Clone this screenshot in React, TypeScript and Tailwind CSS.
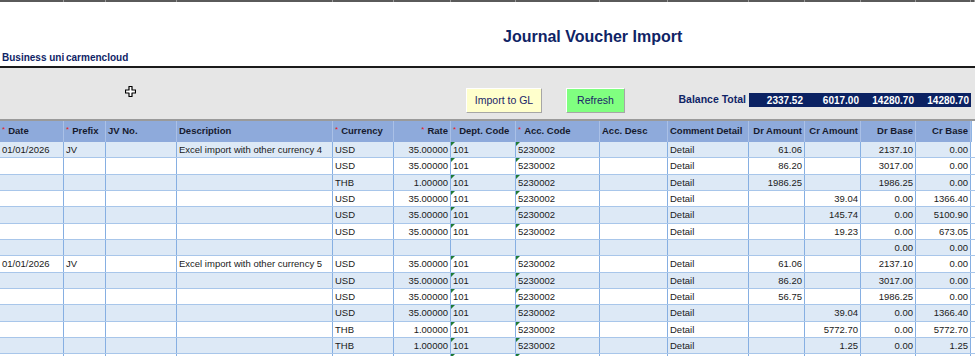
import React from "react";

const COLS =
  "grid grid-cols-[64px_42px_71px_156px_61px_57px_65px_84px_68px_81px_56px_56px_55px_55px_4px]";

type H = { t: string; req?: boolean; right?: boolean };
const headers: H[] = [
  { t: "Date", req: true },
  { t: "Prefix", req: true },
  { t: "JV No." },
  { t: "Description" },
  { t: "Currency", req: true },
  { t: "Rate", req: true, right: true },
  { t: "Dept. Code", req: true },
  { t: "Acc. Code", req: true },
  { t: "Acc. Desc" },
  { t: "Comment Detail" },
  { t: "Dr Amount", right: true },
  { t: "Cr Amount", right: true },
  { t: "Dr Base", right: true },
  { t: "Cr Base", right: true },
];

const RIGHT = new Set([5, 10, 11, 12, 13]);

const line = (
  cur: string,
  rate: string,
  dr: string,
  cr: string,
  drb: string,
  crb: string
) => ["", "", "", "", cur, rate, "101", "5230002", "", "Detail", dr, cr, drb, crb];

const rows: { v: string[]; mark: boolean }[] = [
  {
    v: [
      "01/01/2026",
      "JV",
      "",
      "Excel import with other currency 4",
      "USD",
      "35.00000",
      "101",
      "5230002",
      "",
      "Detail",
      "61.06",
      "",
      "2137.10",
      "0.00",
    ],
    mark: true,
  },
  { v: line("USD", "35.00000", "86.20", "", "3017.00", "0.00"), mark: true },
  { v: line("THB", "1.00000", "1986.25", "", "1986.25", "0.00"), mark: true },
  { v: line("USD", "35.00000", "", "39.04", "0.00", "1366.40"), mark: true },
  { v: line("USD", "35.00000", "", "145.74", "0.00", "5100.90"), mark: true },
  { v: line("USD", "35.00000", "", "19.23", "0.00", "673.05"), mark: true },
  { v: ["", "", "", "", "", "", "", "", "", "", "", "", "0.00", "0.00"], mark: false },
  {
    v: [
      "01/01/2026",
      "JV",
      "",
      "Excel import with other currency 5",
      "USD",
      "35.00000",
      "101",
      "5230002",
      "",
      "Detail",
      "61.06",
      "",
      "2137.10",
      "0.00",
    ],
    mark: true,
  },
  { v: line("USD", "35.00000", "86.20", "", "3017.00", "0.00"), mark: true },
  { v: line("USD", "35.00000", "56.75", "", "1986.25", "0.00"), mark: true },
  { v: line("USD", "35.00000", "", "39.04", "0.00", "1366.40"), mark: true },
  { v: line("THB", "1.00000", "", "5772.70", "0.00", "5772.70"), mark: true },
  { v: line("THB", "1.00000", "", "1.25", "0.00", "1.25"), mark: true },
  { v: ["", "", "", "", "", "", "", "", "", "", "", "", "", ""], mark: true },
];

function Marker() {
  return (
    <span className="absolute left-0 top-0 w-0 h-0 border-t-[4px] border-r-[4px] border-t-[#1e7a34] border-r-transparent" />
  );
}

export default function App() {
  return (
    <div className="w-[975px] h-[356px] overflow-hidden bg-white font-['Liberation_Sans',Arial,sans-serif] text-[#1a1a1a]">
      {/* top strip */}
      <div className={`${COLS} h-[2px]`}>
        {Array.from({ length: 15 }).map((_, i) => (
          <div key={i} className="bg-[#5a5a5a] border-r border-r-[#9a9a9a]" />
        ))}
      </div>

      {/* title area */}
      <div className="h-[64px] flex flex-col">
        <div className="pt-[27px] pl-[503px] text-[16px] leading-[16px] font-bold text-[#0f2466] whitespace-nowrap">
          Journal Voucher Import
        </div>
        <div className={`${COLS} mt-[7.5px] text-[10px] leading-[10px] font-bold text-[#0f2466]`}>
          <div className="pl-[2px] overflow-hidden whitespace-nowrap">Business unit</div>
          <div className="col-span-4 pl-[2px] whitespace-nowrap">carmencloud</div>
        </div>
      </div>

      {/* black line */}
      <div className="h-[2px] bg-[#1a1a1a]" />

      {/* toolbar */}
      <div className="relative h-[51px] bg-[#e6e6e6] flex items-start">
        <svg
          className="absolute left-[125px] top-[18px]"
          width="11"
          height="11"
          viewBox="0 0 11 11"
        >
          <polygon
            points="4,0.5 7,0.5 7,4 10.5,4 10.5,7 7,7 7,10.5 4,10.5 4,7 0.5,7 0.5,4 4,4"
            fill="#ffffff"
            stroke="#000000"
            strokeWidth="1.2"
            strokeLinejoin="round"
          />
        </svg>
        <div className="ml-[466px] mt-[20px] w-[76px] h-[25px] bg-[#ffffcc] border border-t-white border-l-white border-r-[#a6a6a6] border-b-[#a6a6a6] flex items-center justify-center text-[10.5px] text-[#1a2468]">
          Import to GL
        </div>
        <div className="ml-[24px] mt-[20px] w-[59px] h-[25px] bg-[#80ff80] border border-t-white border-l-white border-r-[#a6a6a6] border-b-[#a6a6a6] flex items-center justify-center text-[10.5px] text-[#1a2468]">
          Refresh
        </div>
        <div className="flex-1 mt-[25px] h-[14px] flex items-center justify-end pr-[3px] text-[10.5px] font-bold text-[#0f2466] whitespace-nowrap">
          Balance Total
        </div>
        <div className="mt-[25px] mr-[4px] w-[222px] h-[14px] bg-[#0b2263] grid grid-cols-[56px_56px_55px_55px] text-white font-bold text-[10px]">
          {["2337.52", "6017.00", "14280.70", "14280.70"].map((n, i) => (
            <div key={i} className="flex items-center justify-end pr-[2px]">
              {n}
            </div>
          ))}
        </div>
      </div>

      {/* gray line */}
      <div className="h-[2px] bg-[#9a9a9a]" />

      {/* header */}
      <div className={`${COLS} h-[21px] bg-[#8eaadb] text-[9.5px] font-bold text-[#161a2e]`}>
        {headers.map((h, i) => (
          <div
            key={i}
            className={`flex items-center px-[2px] whitespace-nowrap overflow-hidden border-r border-r-[#aac0e6] ${
              h.right ? "justify-end" : "justify-start"
            }`}
          >
            {h.req && (
              <span className="text-[#e81c1c] text-[8px] leading-[8px] font-normal self-start mt-[5px] mr-[3px]">
                *
              </span>
            )}
            {h.t}
          </div>
        ))}
        <div className="bg-white border-l border-l-[#8fb4e3]" />
      </div>

      {/* rows */}
      {rows.map((r, ri) => (
        <div
          key={ri}
          className={`${COLS} h-[16.33px] text-[9.5px] border-b border-b-[#a8c6ea] ${
            ri % 2 === 0 ? "bg-[#dde9f6]" : "bg-white"
          }`}
        >
          {r.v.map((c, ci) => (
            <div
              key={ci}
              className={`relative flex items-center pt-[1px] px-[2px] whitespace-nowrap overflow-hidden border-r border-r-[#86afe2] ${
                RIGHT.has(ci) ? "justify-end" : "justify-start"
              }`}
            >
              {r.mark && (ci === 6 || ci === 7) && <Marker />}
              {c}
            </div>
          ))}
          <div className="bg-white" />
        </div>
      ))}
    </div>
  );
}
